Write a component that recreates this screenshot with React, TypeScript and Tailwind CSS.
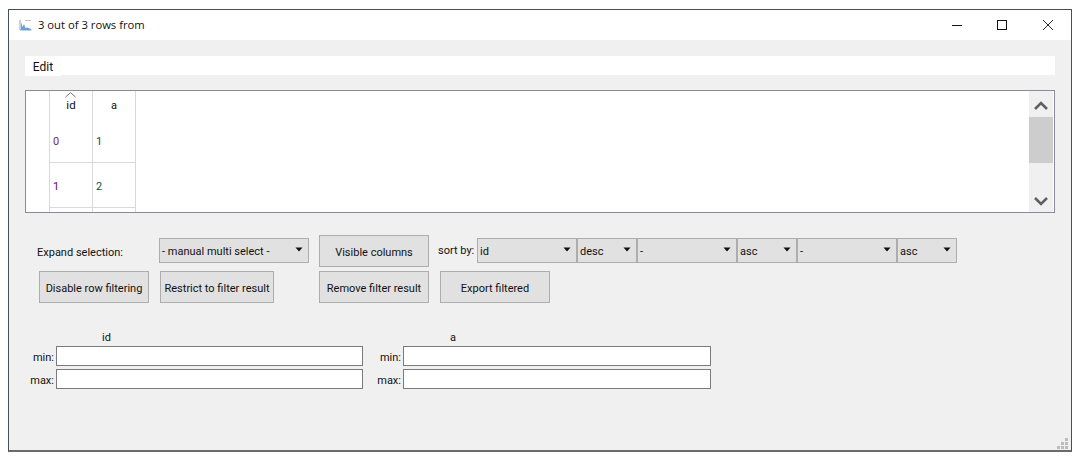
import React from "react";

function Btn({ w, children, className = "" }: { w: string; children: React.ReactNode; className?: string }) {
  return (
    <button className={`${w} ${className} h-[32px] shrink-0 whitespace-nowrap border border-[#adadad] bg-[#e1e1e1] pt-[4px] text-center font-['Roboto',sans-serif] text-[11px] text-[#111]`}>
      {children}
    </button>
  );
}

function Sel({ w, children }: { w: string; children: React.ReactNode }) {
  return (
    <div className={`${w} -mt-[1px] flex h-[25px] shrink-0 items-center justify-between whitespace-nowrap border border-[#adadad] bg-[#e1e1e1] pl-[2px] pr-[5px] font-['Roboto',sans-serif] text-[11px] text-[#111]`}>
      <span className="pt-[3px]">{children}</span>
      <svg className="-mt-[2px]" width="8" height="5" viewBox="0 0 8 5"><path d="M0.5 0.5H7.5L4 4.5Z" fill="#111" /></svg>
    </div>
  );
}

function Input({ w }: { w: string }) {
  return <div className={`${w} ml-[2px] h-[20px] border border-[#7a7a7a] bg-white`} />;
}

function Cell({ children }: { children?: React.ReactNode }) {
  return (
    <div className="flex h-[45px] w-[43px] items-center border-r border-b border-[#d9d9d9] pt-[5px] pl-[3px] font-['Roboto',sans-serif] text-[11px]">
      {children}
    </div>
  );
}

function FilterRow({ label, labelW, inputW, className = "" }: { label: string; labelW: string; inputW: string; className?: string }) {
  return (
    <div className={`${className} flex h-[20px] items-center`}>
      <span className={`${labelW} pt-[3px] text-right leading-[14px]`}>{label}</span>
      <Input w={inputW} />
    </div>
  );
}

export default function App() {
  return (
    <div className="h-[459px] w-[1083px] overflow-hidden bg-white pl-[8px] pt-[9px] font-['Open_Sans','Noto_Sans',sans-serif] text-[#111]">
      <div className="relative flex h-[443px] w-[1064px] flex-col border border-b-2 border-[#4a4f55] border-b-[#6b6b6b] bg-[#f0f0f0]">
        {/* Title bar */}
        <div className="flex h-[30px] shrink-0 items-center bg-white">
          <svg className="ml-[10px]" width="13" height="12" viewBox="0 0 13 12">
            <path d="M1 1V11H12.5" fill="none" stroke="#7fa7cf" strokeWidth="1" />
            <path d="M2 3L3.5 8L5 5L6.5 9L8.5 8.5L12 10V11H2Z" fill="#6f9fd2" />
            <path d="M6 1.5H12" stroke="#c4c4c4" strokeWidth="1" />
          </svg>
          <span className="ml-[6px] text-[11.25px] leading-none">3 out of 3 rows from</span>
          <div className="ml-auto flex items-center">
            <svg width="12" height="12" viewBox="0 0 12 12"><path d="M1 6.5H11" stroke="#111" strokeWidth="1" /></svg>
            <svg className="ml-[33px]" width="12" height="12" viewBox="0 0 12 12"><rect x="1.5" y="1.5" width="9" height="9" fill="none" stroke="#111" strokeWidth="1" /></svg>
            <svg className="ml-[34px] mr-[17px]" width="12" height="12" viewBox="0 0 12 12"><path d="M1 1L11 11M11 1L1 11" stroke="#111" strokeWidth="0.9" /></svg>
          </div>
        </div>

        {/* Menu bar */}
        <div className="ml-[16px] mt-[16px] flex h-[19px] w-[1030px] shrink-0 bg-white">
          <div className="flex h-[20px] w-[36px] items-center justify-center bg-white pt-[1px] font-['Roboto',sans-serif] text-[12px]">Edit</div>
        </div>

        {/* Table */}
        <div className="ml-[16px] mt-[15px] flex h-[123px] w-[1030px] shrink-0 overflow-hidden border border-[#8a8a9a] bg-white">
          <div className="w-[23px] shrink-0" />
          <div className="h-full flex-1 overflow-hidden border-l border-[#d9d9d9] font-['Roboto',sans-serif] text-[11px]">
            <div className="flex h-[27px]">
              <div className="relative flex h-[27px] w-[43px] items-center justify-center border-r border-[#d9d9d9] pt-[2px] text-[11.5px]">
                <svg className="absolute left-[15px] top-[1px]" width="11" height="6" viewBox="0 0 11 6"><path d="M0.5 5L5.5 0.7L10.5 5" fill="none" stroke="#666" strokeWidth="0.9" /></svg>
                id
              </div>
              <div className="flex h-[27px] w-[43px] items-center justify-center border-r border-[#d9d9d9] pt-[4px]">a</div>
            </div>
            <div className="flex">
              <Cell><span className="text-[#7a1f5a]">0</span></Cell>
              <Cell><span className="text-[#0b4f4f]">1</span></Cell>
            </div>
            <div className="flex">
              <Cell><span className="text-[#5a1060]">1</span></Cell>
              <Cell><span className="text-[#0b4f4f]">2</span></Cell>
            </div>
            <div className="flex">
              <Cell />
              <Cell />
            </div>
          </div>
          <div className="mr-[1px] flex h-full w-[24px] shrink-0 flex-col bg-[#f0f0f0]">
            <div className="flex h-[26px] items-center justify-center pt-[4px]">
              <svg width="14" height="10" viewBox="0 0 14 10"><path d="M1 8L7 2L13 8" fill="none" stroke="#606060" strokeWidth="2.6" /></svg>
            </div>
            <div className="h-[46px] bg-[#cdcdcd]" />
            <div className="flex flex-1 items-end justify-center pb-[6px]">
              <svg width="14" height="10" viewBox="0 0 14 10"><path d="M1 2L7 8L13 2" fill="none" stroke="#606060" strokeWidth="2.6" /></svg>
            </div>
          </div>
        </div>

        {/* Controls row 1 */}
        <div className="ml-[28px] mt-[22px] flex h-[32px] items-center font-['Roboto',sans-serif] text-[11px]">
          <span className="w-[122px] shrink-0 whitespace-nowrap pt-[4px]">Expand selection:</span>
          <Sel w="w-[150px]">- manual multi select -</Sel>
          <Btn w="w-[110px]" className="ml-[10px]">Visible columns</Btn>
          <span className="ml-[9px] w-[39px] shrink-0 whitespace-nowrap pt-[1px]">sort by:</span>
          <Sel w="w-[100px]">id</Sel>
          <Sel w="w-[60px]">desc</Sel>
          <Sel w="w-[100px]">-</Sel>
          <Sel w="w-[60px]">asc</Sel>
          <Sel w="w-[100px]">-</Sel>
          <Sel w="w-[60px]">asc</Sel>
        </div>

        {/* Controls row 2 */}
        <div className="ml-[30px] mt-[4px] flex h-[32px]">
          <Btn w="w-[110px]">Disable row filtering</Btn>
          <Btn w="w-[114px]" className="ml-[11px]">Restrict to filter result</Btn>
          <Btn w="w-[110px]" className="ml-[45px]">Remove filter result</Btn>
          <Btn w="w-[110px]" className="ml-[11px]">Export filtered</Btn>
        </div>

        {/* Filters */}
        <div className="mt-[26px] flex font-['Roboto',sans-serif] text-[11px]">
          <div className="flex w-[354px] flex-col">
            <div className="h-[17px] pl-[93px] leading-[17px]">id</div>
            <FilterRow label="min:" labelW="w-[45px]" inputW="w-[307px]" />
            <FilterRow label="max:" labelW="w-[45px]" inputW="w-[307px]" className="mt-[3px]" />
          </div>
          <div className="flex w-[348px] flex-col">
            <div className="h-[17px] pl-[87px] leading-[17px]">a</div>
            <FilterRow label="min:" labelW="w-[38px]" inputW="w-[308px]" />
            <FilterRow label="max:" labelW="w-[38px]" inputW="w-[308px]" className="mt-[3px]" />
          </div>
        </div>

        {/* Resize grip */}
        <svg className="absolute bottom-[1px] right-[3px]" width="11" height="11" viewBox="0 0 11 11">
          <g fill="#bdbdbd">
            <rect x="8" y="0" width="3" height="3" />
            <rect x="4" y="4" width="3" height="3" />
            <rect x="8" y="4" width="3" height="3" />
            <rect x="0" y="8" width="3" height="3" />
            <rect x="4" y="8" width="3" height="3" />
            <rect x="8" y="8" width="3" height="3" />
          </g>
        </svg>
      </div>
    </div>
  );
}
